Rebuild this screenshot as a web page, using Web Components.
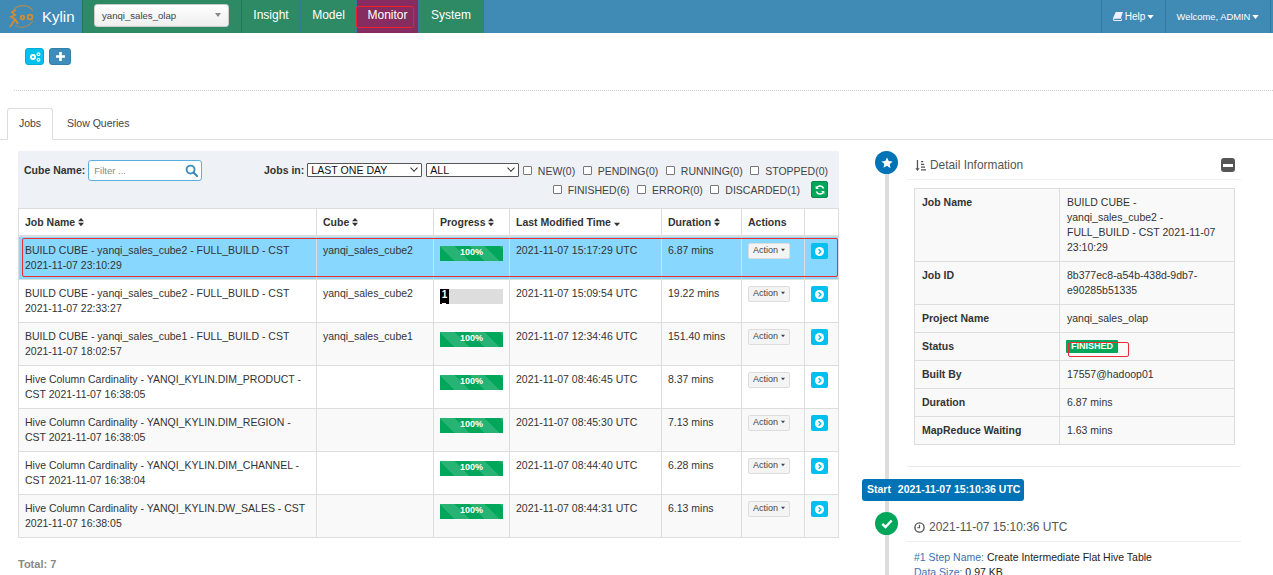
<!DOCTYPE html>
<html>
<head>
<meta charset="utf-8">
<title>Kylin</title>
<style>
  html, body { margin: 0; height: 575px; overflow: hidden; background: #fff; }
  body { font: 12px/15px "Liberation Sans", Arial, sans-serif; color: #333; }
</style>
</head>
<body>
<kylin-navbar></kylin-navbar>
<top-actions></top-actions>
<job-tabs></job-tabs>
<monitor-page>
  <div slot="left">
    <job-toolbar></job-toolbar>
    <job-table></job-table>
    <job-total></job-total>
  </div>
  <job-timeline slot="right"></job-timeline>
</monitor-page>

<script>
const icons = {
  caret: `<svg viewBox="0 0 8 5" width="7" height="4"><path d="M0 0h8L4 5z" fill="currentColor"/></svg>`,
  caretSmall: `<svg viewBox="0 0 8 5" width="6" height="4"><path d="M0 0h8L4 5z" fill="currentColor"/></svg>`,
  sort: `<svg viewBox="0 0 8 11" width="6" height="10"><path d="M4 0l4 4.500H0zM4 11L0 6.500h8z" fill="currentColor"/></svg>`,
  sortDesc: `<svg viewBox="0 0 8 11" width="6" height="10"><path d="M4 11L0 6.500h8z" fill="currentColor"/></svg>`,
  search: `<svg viewBox="0 0 14 14" width="13" height="13"><circle cx="6" cy="6" r="4.300" fill="none" stroke="currentColor" stroke-width="2"/><path d="M9.200 9.200L13 13" stroke="currentColor" stroke-width="2.400" stroke-linecap="round"/></svg>`,
  go: `<svg viewBox="0 0 10 10" width="9" height="9"><circle cx="5" cy="5" r="5" fill="#fff"/><path d="M4 2.600L6.400 5 4 7.400" fill="none" stroke="#00c0ef" stroke-width="1.600"/></svg>`,
  refresh: `<svg viewBox="0 0 12 12" width="10" height="10"><path d="M10.300 4.300A4.600 4.600 0 0 0 2.300 3" fill="none" stroke="#fff" stroke-width="1.800"/><path d="M0.800 0.800v4h4z" fill="#fff"/><path d="M1.700 7.700A4.600 4.600 0 0 0 9.700 9" fill="none" stroke="#fff" stroke-width="1.800"/><path d="M11.200 11.200v-4h-4z" fill="#fff"/></svg>`
};

class KylinNavbar extends HTMLElement {
  constructor() {
    super();
    this.attachShadow({ mode: "open" }).innerHTML = `
      <style>
        :host { display: flex; height: 33px; background: #408ab6; color: #fff; font-size: 12px; }
        .brand { width: 82px; display: flex; align-items: center; box-sizing: border-box; padding-left: 9px; gap: 3px; font-size: 15px; }
        .project { width: 160px; box-sizing: border-box; background: #2e8a64; padding: 4px 0 0 11px; border-left: 1px solid #24765a; border-right: 1px solid #24765a; }
        .select { width: 135px; height: 23px; box-sizing: border-box; border: 1px solid #ccc; border-radius: 3px; background: linear-gradient(#fff, #eee);
          color: #444; font-size: 9.600px; line-height: 21px; padding-left: 7px; position: relative; }
        .select i { position: absolute; right: 7px; top: 8px; width: 0; height: 0; border: 3px solid transparent; border-top: 4px solid #888; }
        nav { display: flex; height: 33px; }
        nav a { box-sizing: border-box; line-height: 30px; text-align: center; background: #2e8a64; border-right: 1px solid #34799a; }
        nav a.active { background: #872c60; position: relative; }
        nav a.active::after { content: ""; position: absolute; left: -1px; top: 6px; width: 58px; height: 22px; box-sizing: border-box; border: 1px solid #f01f2c; border-radius: 2px; }
        .right { margin-left: auto; display: flex; font-size: 10px; line-height: 31px; }
        .right a { box-sizing: border-box; display: flex; align-items: center; justify-content: center; gap: 2px; border-left: 1px solid #34779f; }
        .help { width: 64px; font-size: 10px; }
        .user { width: 106px; margin-right: 2px; border-right: 1px solid #34779f; font-size: 9.400px; }
        svg { display: block; }
      </style>
      <div class="brand">
        <svg viewBox="0 0 30 26" width="30" height="26">
          <g fill="none" stroke="#c98a3e" stroke-width="1.200" opacity=".75">
            <path d="M4 6.500C8 1 18 -1 24 6.500"/>
            <path d="M6 21.500C12 25 20 23 24 16.500"/>
          </g>
          <g fill="none" stroke="#d08c36" stroke-width="1.800">
            <path d="M7 6L3 8l3 3-4 2 4 2-3 5-2 3M6 15l3 5"/>
            <circle cx="13.500" cy="13.500" r="1.800"/>
            <circle cx="21" cy="13" r="2.400"/>
          </g>
        </svg>
        <span>Kylin</span>
      </div>
      <div class="project"><div class="select">yanqi_sales_olap<i></i></div></div>
      <nav>
        <a style="width:59px">Insight</a>
        <a style="width:56px">Model</a>
        <a class="active" style="width:62px">Monitor</a>
        <a style="width:65px">System</a>
      </nav>
      <div class="right">
        <a class="help">
          <svg viewBox="0 0 11 10" width="10" height="9" fill="#eef"><path d="M3 0h8L8.500 7.500H1.500C.8 7.500.8 9 1.700 9h7.300l1-3v3.300L9 10H1.500C-.3 10-.3 7 .5 5.500z"/></svg>
          Help ${icons.caret}
        </a>
        <a class="user">Welcome, ADMIN ${icons.caret}</a>
      </div>`;
  }
}

class TopActions extends HTMLElement {
  constructor() {
    super();
    this.attachShadow({ mode: "open" }).innerHTML = `
      <style>
        :host { display: block; margin-left: 14px; border-bottom: 1px dotted #ccc; padding: 15px 0 0 11px; height: 42px; }
        .row { display: flex; gap: 5px; }
        button { border: 1px solid transparent; border-radius: 3px; height: 17px; padding: 0; display: flex; align-items: center; justify-content: center; color: #fff; }
        .cogs { width: 19px; background: #00c0ef; border-color: #00acd6; }
        .add { width: 22px; background: #3c8dbc; border-color: #367fa9; }
      </style>
      <div class="row">
        <button class="cogs"><svg viewBox="0 0 12 10" width="12" height="10" fill="#fff">
          <circle cx="4" cy="5" r="3"/><circle cx="9.500" cy="2.200" r="1.900"/><circle cx="9.500" cy="7.800" r="1.900"/>
          <circle cx="4" cy="5" r="1.100" fill="#00c0ef"/><circle cx="9.500" cy="2.200" r=".7" fill="#00c0ef"/><circle cx="9.500" cy="7.800" r=".7" fill="#00c0ef"/>
        </svg></button>
        <button class="add"><svg viewBox="0 0 10 10" width="9" height="9"><path d="M3.500 0h3v3.500H10v3H6.500V10h-3V6.500H0v-3h3.500z" fill="#fff"/></svg></button>
      </div>`;
  }
}

class JobTabs extends HTMLElement {
  constructor() {
    super();
    this.attachShadow({ mode: "open" }).innerHTML = `
      <style>
        :host { display: flex; margin-top: 17px; padding-left: 7px; height: 32px; box-sizing: border-box; border-bottom: 1px solid #ddd; font-size: 10.500px; }
        a { box-sizing: border-box; height: 32px; line-height: 29px; color: #444; }
        .on { width: 46px; text-align: center; background: #fff; border: 1px solid #ddd; border-bottom-color: #fff; border-radius: 3px 3px 0 0; }
        .off { margin-left: 14px; line-height: 31px; }
      </style>
      <a class="on">Jobs</a><a class="off">Slow Queries</a>`;
  }
}

class MonitorPage extends HTMLElement {
  constructor() {
    super();
    this.attachShadow({ mode: "open" }).innerHTML = `
      <style>
        :host { display: grid; grid-template-columns: 821px 411px; column-gap: 23px; padding: 11px 0 0 18px; }
      </style>
      <slot name="left"></slot><slot name="right"></slot>`;
  }
}

class JobToolbar extends HTMLElement {
  constructor() {
    super();
    const check = (label) => `<label><i></i>${label}</label>`;
    this.attachShadow({ mode: "open" }).innerHTML = `
      <style>
        :host { display: flex; height: 57px; box-sizing: border-box; background: #eef1f6; padding: 9px 11px 0 6px; font-size: 10.500px; color: #333; }
        b { line-height: 20px; font-size: 10.500px; white-space: nowrap; }
        .filter { margin-left: 3px; width: 114px; height: 21px; box-sizing: border-box; border: 1px solid #5aaee0; border-radius: 3px; background: #fff; color: #888; font-size: 9.500px;
          line-height: 19px; padding: 0 3px 0 5px; display: flex; justify-content: space-between; align-items: center; }
        .filter svg { color: #3c8dbc; }
        .right { margin-left: auto; margin-top: 1px; display: flex; flex-direction: column; align-items: flex-end; }
        .right b { margin-top: -1px; }
        .sel { height: 14px; box-sizing: border-box; border: 1px solid #555; border-radius: 1px; background: #fff; color: #111; font-size: 10.600px; line-height: 12px; padding-left: 3px; position: relative; margin: 2px 0 0 4px; }
        .sel::after { content: ""; position: absolute; right: 4px; top: 1px; width: 5px; height: 5px; border: solid #222; border-width: 0 1.500px 1.500px 0; transform: rotate(45deg) scale(.9); }
        .days { width: 115px; margin-left: 3px; } .all { width: 93px; margin-right: -4px; }
        label { display: flex; align-items: center; gap: 6px; margin-left: 7.500px; color: #444; line-height: 20px; white-space: nowrap; height: 19px; }
        label i { width: 7px; height: 7px; border: 1px solid #777; border-radius: 1px; background: #fff; }
        .line { display: flex; height: 19px; }
        .refresh { width: 17px; height: 17px; margin-left: 11px; margin-top: 1px; background: #00a65a; border: 1px solid #008d4c; box-sizing: border-box; border-radius: 2px; display: flex; align-items: center; justify-content: center; }
      </style>
      <b>Cube Name:</b>
      <div class="filter">Filter ...${icons.search}</div>
      <div class="right">
        <div class="line">
          <b>Jobs in:</b>
          <div class="sel days">LAST ONE DAY</div>
          <div class="sel all">ALL</div>
          ${check("NEW(0)")}${check("PENDING(0)")}${check("RUNNING(0)")}${check("STOPPED(0)")}
        </div>
        <div class="line">
          ${check("FINISHED(6)")}${check("ERROR(0)")}${check("DISCARDED(1)")}
          <div class="refresh">${icons.refresh}</div>
        </div>
      </div>`;
  }
}

class JobProgress extends HTMLElement {
  connectedCallback() {
    const v = this.getAttribute("value");
    const root = this.shadowRoot || this.attachShadow({ mode: "open" });
    root.innerHTML = `
      <style>
        :host { display: block; width: 63px; height: 15px; background: #ddd; margin-top: 3px; overflow: hidden; }
        .done { height: 15px; background-color: #00a65a; color: #fff; font-weight: bold; font-size: 9px; line-height: 12px; text-align: center;
          background-image: linear-gradient(45deg, rgba(255,255,255,.15) 25%, transparent 25%, transparent 50%, rgba(255,255,255,.15) 50%, rgba(255,255,255,.15) 75%, transparent 75%); background-size: 30px 30px; }
        .low { width: 9px; height: 15px; background: #000; color: #fff; font-weight: bold; font-size: 10px; line-height: 12px; text-align: center; position: relative; }
        .low::after { content: ""; position: absolute; left: 2px; bottom: 0; width: 4px; height: 1px; background: #fff; }
      </style>
      ${v === "100" ? `<div class="done">100%</div>` : `<div class="low">${v}</div>`}`;
  }
}

const JOBS = [
  ["BUILD CUBE - yanqi_sales_cube2 - FULL_BUILD - CST<br>2021-11-07 23:10:29", "yanqi_sales_cube2", "100", "2021-11-07 15:17:29 UTC", "6.87 mins"],
  ["BUILD CUBE - yanqi_sales_cube2 - FULL_BUILD - CST<br>2021-11-07 22:33:27", "yanqi_sales_cube2", "1", "2021-11-07 15:09:54 UTC", "19.22 mins"],
  ["BUILD CUBE - yanqi_sales_cube1 - FULL_BUILD - CST<br>2021-11-07 18:02:57", "yanqi_sales_cube1", "100", "2021-11-07 12:34:46 UTC", "151.40 mins"],
  ["Hive Column Cardinality - YANQI_KYLIN.DIM_PRODUCT -<br>CST 2021-11-07 16:38:05", "", "100", "2021-11-07 08:46:45 UTC", "8.37 mins"],
  ["Hive Column Cardinality - YANQI_KYLIN.DIM_REGION -<br>CST 2021-11-07 16:38:05", "", "100", "2021-11-07 08:45:30 UTC", "7.13 mins"],
  ["Hive Column Cardinality - YANQI_KYLIN.DIM_CHANNEL -<br>CST 2021-11-07 16:38:04", "", "100", "2021-11-07 08:44:40 UTC", "6.28 mins"],
  ["Hive Column Cardinality - YANQI_KYLIN.DW_SALES - CST<br>2021-11-07 16:38:05", "", "100", "2021-11-07 08:44:31 UTC", "6.13 mins"]
];

class JobTable extends HTMLElement {
  constructor() {
    super();
    const rows = JOBS.map((j, i) => `
      <tr class="${i === 0 ? "sel" : i % 2 === 0 ? "odd" : ""}">
        <td>${j[0]}</td><td>${j[1]}</td>
        <td><job-progress value="${j[2]}"></job-progress></td>
        <td>${j[3]}</td><td>${j[4]}</td>
        <td><span class="action">Action ${icons.caretSmall}</span></td>
        <td><span class="go">${icons.go}</span></td>
      </tr>`).join("");
    this.attachShadow({ mode: "open" }).innerHTML = `
      <style>
        :host { display: block; position: relative; }
        table { width: 820px; border-collapse: collapse; table-layout: fixed; font-size: 10.500px; color: #333; background: #fff; }
        th, td { border: 1px solid #ddd; padding: 6px 6px; vertical-align: top; text-align: left; height: 30px; box-sizing: content-box; }
        th { height: 14px; line-height: 14px; font-weight: bold; font-size: 10.500px; padding: 6px 6px 6px; border-bottom-width: 2px; }
        th svg { display: inline-block; vertical-align: -1px; }
        tr.odd td { background: #f9f9f9; }
        tr.sel td { background: #87d7ff; }
        .action { display: flex; width: 42px; height: 16px; box-sizing: border-box; align-items: center; gap: 3px; padding: 0 4px 2px; border: 1px solid #ddd; border-radius: 2px; background: #f4f4f4; color: #444; font-size: 9px; line-height: 12px; }
        .go { display: flex; width: 17px; height: 16px; align-items: center; justify-content: center; background: #00c0ef; border-radius: 2px; }
        .mark { position: absolute; left: 4px; top: 30px; width: 816px; height: 39px; box-sizing: border-box; border: 1px solid #ef2b36; border-radius: 2px; pointer-events: none; }
      </style>
      <table>
        <colgroup><col style="width:298px"><col style="width:117px"><col style="width:76px"><col style="width:152px"><col style="width:80px"><col style="width:63px"><col style="width:34px"></colgroup>
        <thead><tr>
          <th>Job Name ${icons.sort}</th><th>Cube ${icons.sort}</th><th>Progress ${icons.sort}</th>
          <th>Last Modified Time ${icons.sortDesc}</th><th>Duration ${icons.sort}</th><th>Actions</th><th></th>
        </tr></thead>
        <tbody>${rows}</tbody>
      </table>
      <div class="mark"></div>`;
  }
}

class JobTotal extends HTMLElement {
  constructor() {
    super();
    this.attachShadow({ mode: "open" }).innerHTML = `
      <style>:host { display: block; margin-top: 19px; font-size: 11px; font-weight: bold; color: #888; }</style>
      Total: 7`;
  }
}

const DETAILS = [
  ["Job Name", "BUILD CUBE -<br>yanqi_sales_cube2 -<br>FULL_BUILD - CST 2021-11-07<br>23:10:29"],
  ["Job ID", "8b377ec8-a54b-438d-9db7-<br>e90285b51335"],
  ["Project Name", "yanqi_sales_olap"],
  ["Status", `<span class="label">FINISHED</span><span class="mark"></span>`],
  ["Built By", "17557@hadoop01"],
  ["Duration", "6.87 mins"],
  ["MapReduce Waiting", "1.63 mins"]
];

class JobTimeline extends HTMLElement {
  constructor() {
    super();
    const rows = DETAILS.map((d) => `<tr><th>${d[0]}</th><td>${d[1]}</td></tr>`).join("");
    this.attachShadow({ mode: "open" }).innerHTML = `
      <style>
        :host { display: block; position: relative; height: 425px; overflow: hidden; font-size: 10.500px; color: #333; }
        .line { position: absolute; left: 23px; top: 0; width: 4px; bottom: 0; background: #ddd; }
        .dot { position: absolute; left: 13px; width: 23px; height: 23px; border-radius: 50%; display: flex; align-items: center; justify-content: center; }
        .panel { margin: 0 0 0 45px; width: 334px; height: 316px; box-sizing: border-box; position: relative; background: #fff; border-bottom: 1px solid #e8e8e8; border-radius: 0 0 3px 3px; padding: 0 6px; }
        .head { height: 28px; margin: 0 -6px; padding: 0 6px 0 8px; display: flex; align-items: center; gap: 4px; color: #555; font-size: 11.900px; border-bottom: 1px solid #f0f0f0; }
        .min { margin-left: auto; width: 14px; height: 14px; background: #555; border-radius: 3px; display: flex; align-items: center; justify-content: center; }
        .min::before { content: ""; width: 10px; height: 3px; background: #fff; }
        table { margin: 8px 0 0 1px; width: 321px; border-collapse: collapse; table-layout: fixed; background: #f9f9f9; }
        th, td { border: 1px solid #ddd; padding: 6px 7px; text-align: left; vertical-align: top; line-height: 15px; }
        th { width: 130px; font-weight: bold; }
        .label { display: inline-block; background: #00a65a; color: #fff; font-weight: bold; font-size: 9px; line-height: 13px; padding: 0 5px; border-radius: 1px; vertical-align: top; margin: 1px 0 0 -1px; }
        td { position: relative; }
        .mark { position: absolute; left: 8px; top: 9px; width: 61px; height: 15px; box-sizing: border-box; border: 1px solid #ee2a35; border-radius: 2px; }
        .start { position: absolute; left: 0; top: 328px; width: 162px; height: 22px; box-sizing: border-box; background: #0073b7; color: #fff; border-radius: 3px; font-weight: bold; font-size: 10.500px; line-height: 21px; padding-left: 5px; white-space: nowrap; }
        .start span { margin-left: 4px; }
        .step { margin-left: 45px; position: absolute; top: 361px; left: 0; width: 334px; }
        .time { height: 30px; box-sizing: border-box; display: flex; align-items: center; gap: 4px; font-size: 12px; color: #555; padding: 1px 0 0 7px; border-bottom: 1px solid #eee; }
        .body { padding: 8px 0 0 7px; color: #222; }
        .body em { font-style: normal; color: #3e6fb0; }
      </style>
      <div class="line"></div>
      <div class="dot" style="top:0;background:#0073b7">
        <svg viewBox="0 0 12 12" width="12" height="12"><path d="M6 .5l1.700 3.600 3.900.5-2.900 2.700.8 3.900L6 8.800 2.500 10.700l.8-3.900L.4 4.600l3.900-.5z" fill="#fff"/></svg>
      </div>
      <div class="panel">
        <div class="head">
          <svg viewBox="0 0 12 12" width="11" height="11" fill="#555"><path d="M2 0h1.400v9H5L2.700 12 .4 9H2zM6.500 1H9v1.400H6.500zM6.500 4h3.500v1.400H6.500zM6.500 7H11v1.400H6.500zM6.500 10H12v1.400H6.500z"/></svg>
          <span>Detail Information</span><i class="min"></i>
        </div>
        <table>${rows}</table>
      </div>
      <div class="start">Start <span>2021-11-07 15:10:36 UTC</span></div>
      <div class="dot" style="top:361px;background:#00a65a">
        <svg viewBox="0 0 12 10" width="12" height="10"><path d="M1.300 5L4.500 8l6.200-6.500" fill="none" stroke="#fff" stroke-width="2.400"/></svg>
      </div>
      <div class="step">
        <div class="time">
          <svg viewBox="0 0 12 12" width="11" height="11"><circle cx="6" cy="6" r="5" fill="none" stroke="#555" stroke-width="1.500"/><path d="M6 3v3.300H3.500" fill="none" stroke="#555" stroke-width="1.300"/></svg>
          2021-11-07 15:10:36 UTC
        </div>
        <div class="body"><em>#1 Step Name:</em> Create Intermediate Flat Hive Table<br><em>Data Size:</em> 0.97 KB</div>
      </div>`;
  }
}

customElements.define("kylin-navbar", KylinNavbar);
customElements.define("top-actions", TopActions);
customElements.define("job-tabs", JobTabs);
customElements.define("monitor-page", MonitorPage);
customElements.define("job-toolbar", JobToolbar);
customElements.define("job-progress", JobProgress);
customElements.define("job-table", JobTable);
customElements.define("job-total", JobTotal);
customElements.define("job-timeline", JobTimeline);
</script>
</body>
</html>
